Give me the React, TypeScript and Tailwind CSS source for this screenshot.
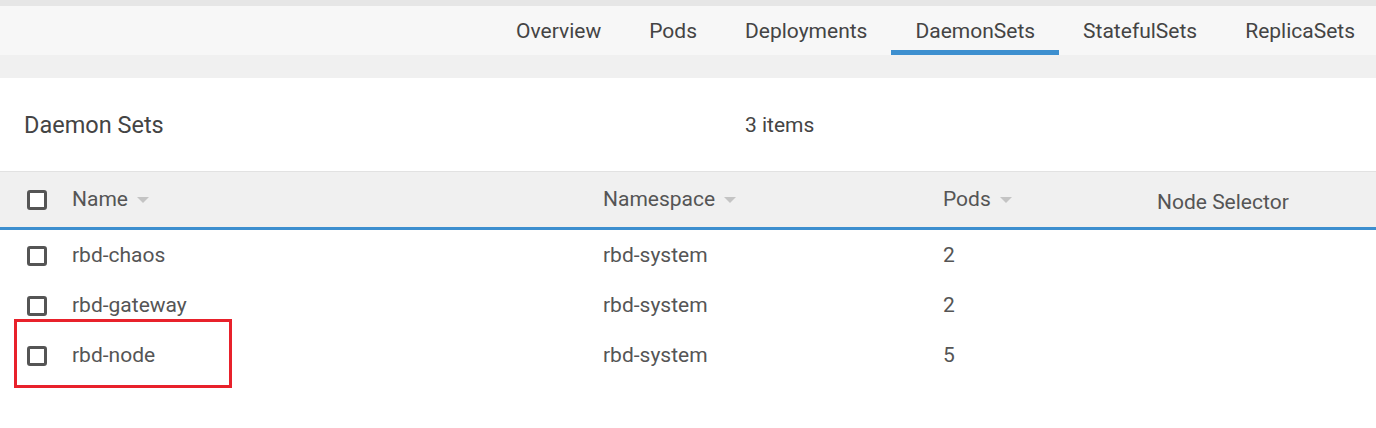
import React from "react";

const tabs = ["Overview", "Pods", "Deployments", "DaemonSets", "StatefulSets", "ReplicaSets"];
const rows = [
  { name: "rbd-chaos", ns: "rbd-system", pods: "2" },
  { name: "rbd-gateway", ns: "rbd-system", pods: "2" },
  { name: "rbd-node", ns: "rbd-system", pods: "5" },
];

function Box() {
  return <div className="w-[20px] h-[20px] border-[3px] border-[#555555] rounded-[3px] bg-white" />;
}

function Arrow() {
  return (
    <svg width="12" height="7" viewBox="0 0 12 7" className="ml-[9px] mt-[1px]">
      <polygon points="0,0 12,0 6,6" fill="#c4c4c4" />
    </svg>
  );
}

export default function App() {
  return (
    <div className="w-[1376px] h-[428px] bg-white overflow-hidden" style={{ fontFamily: "Roboto, 'Liberation Sans', sans-serif" }}>
      <div className="h-[6px] bg-[#e6e6e6]" />
      <div className="h-[49px] bg-[#f7f7f7] flex justify-end mr-[-3px]">
        {tabs.map((t) => (
          <div key={t} className="relative px-6 flex items-center text-[21px] text-[#444444] pt-[2px]">
            {t}
            {t === "DaemonSets" && <div className="absolute left-0 right-0 bottom-0 h-[5px] bg-[#3d8fcf]" />}
          </div>
        ))}
      </div>
      <div className="h-[23px] bg-[#f0f0f0]" />
      <div className="h-[93px] flex items-center text-[#444444] pt-[3px]">
        <div className="w-[745px] pl-[24px] text-[23.5px]">Daemon Sets</div>
        <div className="text-[21px]">3 items</div>
      </div>
      <div className="h-[59px] bg-[#f0f0f0] border-t border-[#e2e2e2] border-b-[3px] border-b-[#3d8fcf] grid grid-cols-[72px_531px_340px_214px_1fr] items-center text-[21px] text-[#555555] pt-[1px]">
        <div className="pl-[27px]"><Box /></div>
        <div className="flex items-center">Name<Arrow /></div>
        <div className="flex items-center">Namespace<Arrow /></div>
        <div className="flex items-center">Pods<Arrow /></div>
        <div className="pt-[6px]">Node Selector</div>
      </div>
      {rows.map((r, i) => (
        <div key={r.name} className="relative h-[50px] grid grid-cols-[72px_531px_340px_214px_1fr] items-center text-[21px] text-[#555555] pt-[1px]">
          <div className="pl-[27px]"><Box /></div>
          <div>{r.name}</div>
          <div>{r.ns}</div>
          <div>{r.pods}</div>
          <div />
          {i === 2 && <div className="absolute left-[14px] top-[-11px] w-[218px] h-[69px] border-[3px] border-[#e8212b]" />}
        </div>
      ))}
    </div>
  );
}
